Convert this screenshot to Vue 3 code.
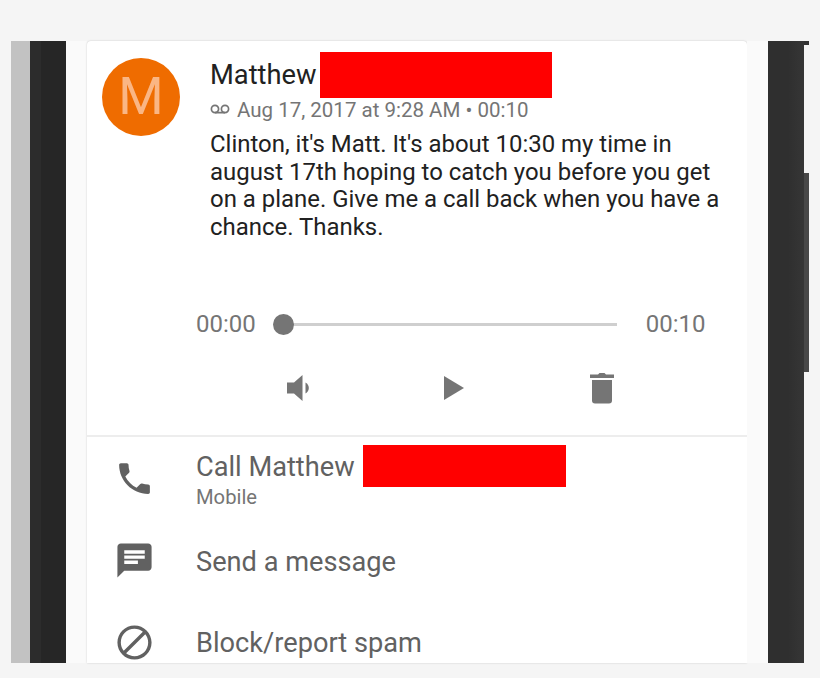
<template>
  <div class="page">
    <div class="side-left">
      <div class="strip-gray"></div>
      <div class="strip-dark"></div>
    </div>

    <div class="card">
      <section class="voicemail">
        <div class="head">
          <div class="avatar">M</div>
          <div class="info">
            <div class="name">
              <span>Matthew</span>
              <span class="redact redact-name"></span>
            </div>
            <div class="meta">
              <svg class="vm-icon" viewBox="0 0 20 10" width="20" height="10">
                <circle cx="5" cy="5" r="3.6" fill="none" stroke="#757575" stroke-width="1.7" />
                <circle cx="15" cy="5" r="3.6" fill="none" stroke="#757575" stroke-width="1.7" />
                <path d="M5 8.6h10" stroke="#757575" stroke-width="1.7" />
              </svg>
              <span>Aug 17, 2017 at 9:28 AM • 00:10</span>
            </div>
            <p class="transcript">
              Clinton, it's Matt. It's about 10:30 my time in<br />
              august 17th hoping to catch you before you get<br />
              on a plane. Give me a call back when you have a<br />
              chance. Thanks.
            </p>
          </div>
        </div>

        <div class="player">
          <span class="time">00:00</span>
          <div class="track"><span class="thumb"></span></div>
          <span class="time">00:10</span>
        </div>

        <div class="controls">
          <svg viewBox="0 0 26 28" width="26" height="28">
            <path d="M0 8.5h7L15.500 1v26L7 19.500H0z" fill="#757575" />
            <path d="M18.500 8.500c2 1 3.300 3.100 3.300 5.500s-1.300 4.500-3.300 5.500z" fill="#757575" />
          </svg>
          <svg class="play" viewBox="0 0 20 24" width="20" height="24">
            <path d="M0 0l20 12L0 24z" fill="#757575" />
          </svg>
          <svg viewBox="0 0 26 32" width="26" height="32">
            <path d="M9 2.500 10.500 1h5L17 2.500h8V6H1V2.500z" fill="#757575" />
            <path d="M3 8h20v20.500a3 3 0 0 1-3 3H6a3 3 0 0 1-3-3z" fill="#757575" />
          </svg>
        </div>
      </section>

      <ul class="actions">
        <li class="action action-call">
          <svg class="action-icon" viewBox="0 0 24 24" width="41" height="41">
            <path d="M6.620 10.790c1.440 2.830 3.760 5.140 6.590 6.590l2.200-2.200c.27-.27.670-.36 1.020-.24 1.120.37 2.330.57 3.570.57.550 0 1 .45 1 1V20c0 .55-.45 1-1 1-9.390 0-17-7.610-17-17 0-.55.450-1 1-1h3.500c.55 0 1 .45 1 1 0 1.250.2 2.450.57 3.570.11.350.03.740-.25 1.020l-2.200 2.200z" fill="#616161" />
          </svg>
          <div class="action-text">
            <div class="action-title title-call">
              <span>Call Matthew</span>
              <span class="redact redact-call"></span>
            </div>
            <div class="action-sub">Mobile</div>
          </div>
        </li>
        <li class="action action-message">
          <svg class="action-icon" viewBox="0 0 24 24" width="41" height="41">
            <path d="M20 2H4c-1.100 0-1.990.9-1.990 2L2 22l4-4h14c1.100 0 2-.9 2-2V4c0-1.100-.9-2-2-2zM6 9h12v2H6V9zm8 5H6v-2h8v2zm4-6H6V6h12v2z" fill="#616161" />
          </svg>
          <div class="action-title title-message">Send a message</div>
        </li>
        <li class="action action-block">
          <svg class="action-icon" viewBox="0 0 24 24" width="41" height="41">
            <path d="M12 2C6.480 2 2 6.480 2 12s4.480 10 10 10 10-4.480 10-10S17.520 2 12 2zM4 12c0-4.420 3.580-8 8-8 1.850 0 3.550.63 4.900 1.690L5.690 16.900C4.630 15.550 4 13.850 4 12zm8 8c-1.850 0-3.550-.63-4.900-1.690L18.310 7.100C19.370 8.450 20 10.150 20 12c0 4.420-3.580 8-8 8z" fill="#616161" />
          </svg>
          <div class="action-title">Block/report spam</div>
        </li>
      </ul>
    </div>

    <div class="side-right">
      <div class="strip-dark-right"></div>
      <div class="scroll-col">
        <span class="scroll-cap"></span>
        <span class="scroll-bar"></span>
      </div>
    </div>
  </div>
</template>

<script setup>
</script>

<style>
html,
body {
  margin: 0;
  background: #f5f5f5;
}
</style>

<style scoped>
.page {
  display: flex;
  box-sizing: border-box;
  width: 820px;
  height: 678px;
  padding: 41px 0 15px 11px;
  background: #f5f5f5;
  font-family: Roboto, "Liberation Sans", sans-serif;
  overflow: hidden;
}

.side-left {
  display: flex;
  width: 76px;
  flex: none;
  background: #fafafa;
}

.strip-gray {
  width: 19px;
  background: #c2c2c2;
}

.strip-dark {
  width: 36px;
  background: linear-gradient(90deg, #2c2c2c 0, #2c2c2c 11px, #262626 11px);
}

.card {
  width: 660px;
  flex: none;
  background: #fff;
  border-radius: 4px 4px 0 0;
  box-shadow: 0 0 2px rgba(0, 0, 0, 0.2);
  overflow: hidden;
}

.voicemail {
  box-sizing: border-box;
  height: 396px;
  padding: 11px 0 0 15px;
  border-bottom: 2px solid #ededed;
}

.head {
  display: flex;
}

.avatar {
  width: 78px;
  height: 78px;
  margin-top: 6px;
  flex: none;
  border-radius: 50%;
  background: #ef6c00;
  color: #fab684;
  font-size: 52px;
  line-height: 78px;
  text-align: center;
}

.info {
  margin-left: 30px;
}

.name {
  position: relative;
  font-size: 27.3px;
  line-height: 46px;
  color: #212121;
}

.redact {
  position: absolute;
  background: #ff0000;
}

.redact-name {
  top: 0;
  left: 110px;
  width: 232px;
  height: 46px;
}

.meta {
  display: flex;
  align-items: center;
  height: 26px;
  margin-top: -1px;
  color: #757575;
  font-size: 20.5px;
}

.vm-icon {
  margin: 0 7px 3px 0;
}

.transcript {
  margin: 8px 0 0;
  color: #212121;
  font-size: 23.95px;
  line-height: 27.6px;
  white-space: nowrap;
}

.player {
  display: flex;
  align-items: center;
  margin: 68px 0 0 94px;
  height: 30px;
}

.time {
  color: #757575;
  font-size: 24px;
}

.track {
  position: relative;
  width: 333px;
  height: 3px;
  margin: 0 29px 0 28px;
  background: #cfcfcf;
}

.thumb {
  position: absolute;
  top: -9px;
  left: -11px;
  width: 21px;
  height: 21px;
  border-radius: 50%;
  background: #757575;
}

.controls {
  display: flex;
  align-items: center;
  height: 34px;
  margin: 32px 0 0 185px;
}

.play {
  margin: 0 125px 0 131px;
}

.actions {
  margin: 0;
  padding: 0;
  list-style: none;
}

.action {
  display: flex;
  align-items: center;
  padding-left: 27px;
}

.action-icon {
  flex: none;
  margin-right: 41px;
}

.action-call {
  height: 83px;
}

.action-message {
  height: 81px;
}

.action-block {
  height: 83px;
}

.action-title {
  position: relative;
  color: #616161;
  font-size: 27.2px;
  line-height: 34px;
}

.title-call {
  padding-top: 1px;
}

.title-message {
  padding-top: 2px;
}

.action-sub {
  margin-top: 1px;
  color: #757575;
  font-size: 20.2px;
  line-height: 24px;
}

.redact-call {
  top: -4px;
  left: 167px;
  width: 203px;
  height: 42px;
}

.side-right {
  display: flex;
  flex: none;
  width: 73px;
  background: linear-gradient(90deg, #fafafa 0, #fafafa 21px, transparent 21px);
}

.strip-dark-right {
  width: 36px;
  margin-left: 21px;
  background: linear-gradient(90deg, #2f2f2f 0, #2f2f2f 20px, #363636 36px);
}

.scroll-col {
  display: flex;
  flex-direction: column;
  width: 5px;
}

.scroll-cap {
  height: 4px;
  background: #333;
}

.scroll-bar {
  width: 5px;
  height: 199px;
  margin-top: 128px;
  background: #484848;
}
</style>
